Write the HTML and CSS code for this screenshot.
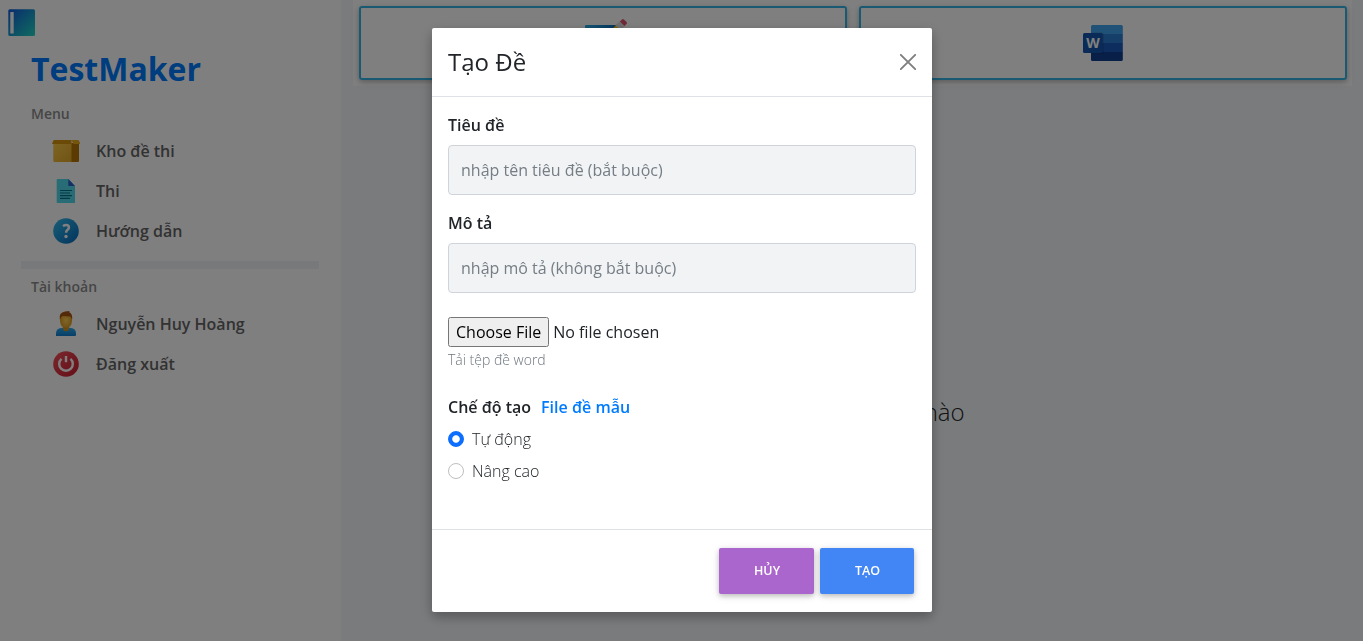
FILE: index.html
```html
<!DOCTYPE html>
<html lang="vi">
<head>
<meta charset="utf-8">
<title>TestMaker</title>
<link rel="stylesheet" href="styles.css">
</head>
<body>
<div class="app">
  <aside class="sidebar">
    <svg class="toggle" width="28" height="28" viewBox="0 0 28 28">
      <defs><linearGradient id="book" x1="0" y1="0" x2="1" y2="1"><stop offset="0" stop-color="#1158dc"/><stop offset="1" stop-color="#20d8c0"/></linearGradient></defs>
      <rect x="0.3" y="0.3" width="26.7" height="26.7" rx="1.5" fill="url(#book)"/>
      <rect x="2.3" y="3" width="3.4" height="21.6" rx=".6" fill="#fff"/>
    </svg>
    <h1 class="brand">TestMaker</h1>
    <div class="group-title">Menu</div>
    <nav class="menu">
      <a class="item">
        <svg class="icon" width="32" height="32" viewBox="0 0 32 32">
          <defs><linearGradient id="box" x1="0" y1="0" x2="1" y2="1"><stop offset="0" stop-color="#fcc944"/><stop offset="1" stop-color="#e0a828"/></linearGradient></defs>
          <path d="M3.300 8H22v19H4.500q-1.200 0-1.200-1.200z" fill="url(#box)"/>
          <path d="M21.500 8H29v17.800q0 1.200-1.200 1.200h-6.300z" fill="#b67604"/>
          <path d="M3.800 5H21.500v4H2.600q-.7 0-.5-.8z" fill="#d4940c"/>
          <path d="M21.500 5h7l1.700 3.200q0 .8-.7.800h-6z" fill="#eaaa18"/>
        </svg>
        <span>Kho đề thi</span>
      </a>
      <a class="item">
        <svg class="icon" width="32" height="32" viewBox="0 0 32 32">
          <path d="M7.500 4H18.300l6.700 7v17H7.500Q6.700 28 6.700 27.200V4.800Q6.700 4 7.500 4z" fill="#50d8ed"/>
          <path d="M18.300 4L25 11h-6Q18.300 11 18.300 10.300z" fill="#2860c8"/>
          <path d="M10 15.500h12M10 18h10M10 20.700h12M10 23.300h10" stroke="#067389" stroke-width="1.200"/>
        </svg>
        <span>Thi</span>
      </a>
      <a class="item">
        <svg class="icon" width="32" height="32" viewBox="0 0 32 32">
          <defs><linearGradient id="help" x1="0" y1="0" x2="1" y2="1"><stop offset="0" stop-color="#33bef0"/><stop offset="1" stop-color="#0468b8"/></linearGradient></defs>
          <circle cx="16" cy="16" r="12.800" fill="url(#help)"/>
          <path d="M13 11.200q1.400-1.100 3.100-1.100 2.800 0 2.800 2.400 0 1.400-1.600 2.500-1.200.8-1.200 2.700" fill="none" stroke="#fff" stroke-width="2.500"/>
          <circle cx="16" cy="21.500" r="1.700" fill="#fff"/>
        </svg>
        <span>Hướng dẫn</span>
      </a>
    </nav>
    <div class="divider"></div>
    <div class="group-title account">Tài khoản</div>
    <nav class="menu">
      <a class="item">
        <svg class="icon" width="32" height="32" viewBox="0 0 32 32">
          <defs>
            <linearGradient id="shirt" x1="0" y1="0" x2="0" y2="1"><stop offset="0" stop-color="#31abec"/><stop offset="1" stop-color="#0d7ed1"/></linearGradient>
            <radialGradient id="face"><stop offset="0" stop-color="#ffcf54"/><stop offset="1" stop-color="#e09d25"/></radialGradient>
          </defs>
          <path d="M6 28v-2.500Q6 20 12.500 19.800h7Q26 20 26 25.500V27q0 1-1 1z" fill="url(#shirt)"/>
          <path d="M13 17h6v4q-.5 2.300-3 2.300T13 21z" fill="#d6941f"/>
          <path d="M10 9Q10 5 16 5t6 4v4q-.5 7-6 7t-6-7z" fill="url(#face)"/>
          <path d="M9.800 11.500Q8.500 4.500 15 3.500L19.500 3l-.3 1.300Q22.300 5 22.200 11.500L20.500 8.500 12.500 8q-1.800 1-2.700 3.500z" fill="#a85210"/>
        </svg>
        <span>Nguyễn Huy Hoàng</span>
      </a>
      <a class="item">
        <svg class="icon" width="32" height="32" viewBox="0 0 32 32">
          <defs><linearGradient id="off" x1="0" y1="0" x2="1" y2="1"><stop offset="0" stop-color="#f44f5a"/><stop offset="1" stop-color="#cc1d30"/></linearGradient></defs>
          <circle cx="16" cy="16" r="12.800" fill="url(#off)"/>
          <path d="M11.500 10.900a6.800 6.800 0 1 0 9 0" fill="none" stroke="#fff" stroke-width="2.400"/>
          <path d="M16 8v6.200" stroke="#fff" stroke-width="2.400"/>
        </svg>
        <span>Đăng xuất</span>
      </a>
    </nav>
  </aside>
  <main class="main">
    <div class="cards">
      <div class="card">
        <svg width="48" height="48" viewBox="0 0 48 48">
          <defs><linearGradient id="page" x1="0" y1="0" x2="1" y2="0"><stop offset="0" stop-color="#28afea"/><stop offset="1" stop-color="#0b6abf"/></linearGradient></defs>
          <path d="M7 6h31v35q0 1-1 1H7q-1 0-1-1V7q0-1 1-1z" fill="url(#page)"/>
          <path d="M25 19L38 5l5 5-13 13-7 2z" fill="#f5be00"/>
          <path d="M36.500 6.500l5-5 5 5-5 5z" fill="#dedede"/>
          <path d="M41 2.500L43 .5q1-.9 2 .1l2.500 2.500q.9.900 0 2L45.500 7z" fill="#e0526a"/>
        </svg>
      </div>
      <div class="card">
        <svg width="48" height="48" viewBox="0 0 48 48">
          <path d="M12 15V7.500Q12 6 13.500 6h28.800q1.500 0 1.500 1.500V15z" fill="#41a5ee"/>
          <path d="M12 15h31.800v9H12z" fill="#2b7cd3"/>
          <path d="M12 24h31.800v9H12z" fill="#185abd"/>
          <path d="M12 33h31.800v7.500q0 1.500-1.500 1.500H13.500Q12 42 12 40.500z" fill="#103f91"/>
          <rect x="12" y="13.500" width="12.500" height="21" rx="1.500" fill="#000" opacity=".16"/>
          <rect x="4" y="14" width="19.500" height="20" rx="1.500" fill="#1556ae"/>
          <text class="word-letter" x="13.900" y="28.800" text-anchor="middle">W</text>
        </svg>
      </div>
    </div>
    <p class="empty">Không có đề thi nào</p>
  </main>
</div>

<div class="backdrop">
  <section class="modal">
    <header class="modal-header">
      <h2 class="modal-title">Tạo Đề</h2>
      <svg class="close" width="16" height="16" viewBox="0 0 16 16"><path d="M.8.800l14.400 14.400M15.200.800L.8 15.200" stroke="#7f7f7f" stroke-width="1.900" stroke-linecap="round"/></svg>
    </header>
    <div class="modal-body">
      <label class="label" for="title">Tiêu đề</label>
      <input class="field" id="title" type="text" placeholder="nhập tên tiêu đề (bắt buộc)">
      <label class="label" for="desc">Mô tả</label>
      <input class="field" id="desc" type="text" placeholder="nhập mô tả (không bắt buộc)">
      <input class="file" type="file">
      <small class="hint">Tải tệp đề word</small>
      <div class="mode"><span>Chế độ tạo</span><a class="sample">File đề mẫu</a></div>
      <label class="radio"><input class="dot" type="radio" name="mode" checked><span>Tự động</span></label>
      <label class="radio"><input class="dot" type="radio" name="mode"><span>Nâng cao</span></label>
    </div>
    <footer class="modal-footer">
      <button class="btn cancel">HỦY</button>
      <button class="btn create">TẠO</button>
    </footer>
  </section>
</div>
</body>
</html>
```

FILE: styles.css
```css
* { box-sizing: border-box; }
body {
  margin: 0;
  height: 641px;
  overflow: hidden;
  font: 300 16px/24px "Open Sans", "Noto Sans", sans-serif;
  color: #212529;
}
h1, h2, p { margin: 0; }
svg { display: block; flex: none; }

.app { display: flex; height: 641px; background: #f4f6f9; }
.sidebar { width: 341px; background: #fff; }
.toggle { margin: 9px 0 0 8px; }
.brand {
  margin: 12px 0 0 31px;
  font-size: 32px;
  line-height: 40px;
  font-weight: 700;
  color: #007bff;
}
.group-title {
  margin: 15px 0 0 31px;
  font-size: 14px;
  line-height: 20px;
  font-weight: 600;
  color: #8c8c8c;
}
.group-title.account { margin-top: 8px; }
.menu { margin: 7px 0 0 50px; }
.item {
  display: flex;
  align-items: center;
  gap: 14px;
  height: 40px;
  font-weight: 600;
  color: #646464;
}
.divider { margin: 10px 22px 0 21px; height: 8px; background: #f0f2f5; }

.main { flex: 1; padding: 0 11px 0 12px; }
.cards {
  display: flex;
  gap: 12px;
  height: 86px;
  padding: 6px 5px 6px 6px;
  background: #fff;
}
.card {
  flex: 1;
  display: flex;
  align-items: flex-start;
  justify-content: center;
  padding-top: 11px;
  border: 2px solid #33b5e5;
  border-radius: 3px;
  box-shadow: 0 2px 5px rgba(0,0,0,.2), 0 2px 10px rgba(0,0,0,.1);
}
.word-letter { font: 700 14px "Open Sans", sans-serif; fill: #fff; }
.empty {
  margin-top: 308px;
  padding-left: 9px;
  text-align: center;
  font-size: 24px;
  line-height: 36px;
}

.backdrop {
  position: fixed;
  inset: 0;
  display: flex;
  align-items: flex-start;
  justify-content: center;
  padding: 28px 0 0 1px;
  background: rgba(0,0,0,.5);
}
.modal {
  display: flex;
  flex-direction: column;
  width: 500px;
  height: 584px;
  background: #fff;
  border-radius: 2px;
  box-shadow: 0 5px 11px rgba(0,0,0,.18), 0 4px 15px rgba(0,0,0,.15);
}
.modal-header {
  display: flex;
  align-items: center;
  justify-content: space-between;
  height: 69px;
  padding: 0 16px;
  border-bottom: 1px solid #dee2e6;
}
.modal-title { font-size: 24px; line-height: 36px; font-weight: 400; }
.modal-body { flex: 1; padding: 16px; }
.label { display: block; margin-bottom: 8px; font-weight: 600; }
.field {
  display: block;
  width: 100%;
  height: 50px;
  margin-bottom: 16px;
  padding: 0 12px;
  border: 1px solid #ced4da;
  border-radius: 4px;
  background: #f2f3f5;
  font: 400 16px "Open Sans", "Noto Sans", sans-serif;
}
.field::placeholder { color: #757d85; opacity: 1; }
.file {
  display: block;
  margin-top: 24px;
  height: 30px;
  font: 400 16px/24px "Open Sans", "Noto Sans", sans-serif;
  color: inherit;
}
.file::file-selector-button {
  height: 30px;
  font: inherit;
}
.hint {
  display: block;
  margin-top: 1px;
  font-size: 14px;
  color: #6c757d;
}
.mode { display: flex; gap: 10px; margin-top: 23px; font-weight: 600; }
.sample { color: #007bff; }
.radio { display: flex; align-items: center; gap: 8px; margin-top: 8px; }
.dot {
  appearance: none;
  width: 16px;
  height: 16px;
  margin: 0;
  border: 1px solid #bfbfbf;
  border-radius: 50%;
  background: #fff;
}
.dot:checked {
  border-color: #0d6efd;
  background: radial-gradient(circle, #fff 3.300px, #0d6efd 4.200px);
}
.modal-footer {
  display: flex;
  justify-content: flex-end;
  gap: 6px;
  height: 83px;
  padding: 18px 18px 0 0;
  border-top: 1px solid #dee2e6;
}
.btn {
  height: 46px;
  padding: 0 0 2px 1px;
  border: 0;
  border-radius: 2px;
  font: 600 12.500px "Open Sans", "Noto Sans", sans-serif;
  color: #fff;
  box-shadow: 0 2px 5px rgba(0,0,0,.2), 0 2px 10px rgba(0,0,0,.1);
}
.cancel { width: 95px; background: #a6c; }
.create { width: 94px; background: #4285f4; }
```
